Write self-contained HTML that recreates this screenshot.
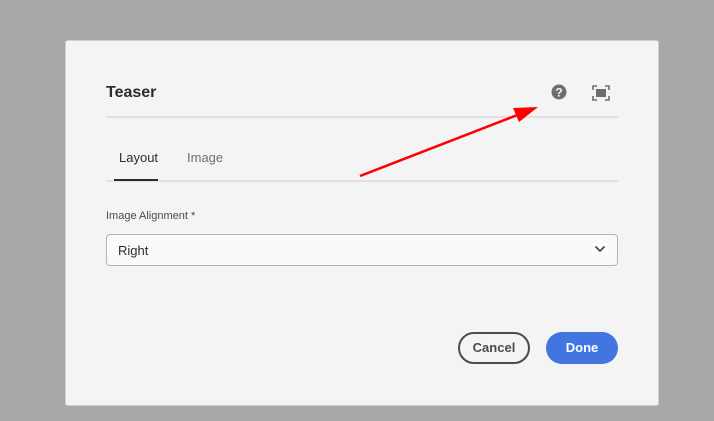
<!DOCTYPE html>
<html><head><meta charset="utf-8"><style>
*{margin:0;padding:0;box-sizing:border-box}
body{width:714px;height:421px;background:#a8a8a8;position:relative;overflow:hidden;font-family:"Liberation Sans",sans-serif}
.dlg{position:absolute;left:65px;top:40px;width:594px;height:366px;background:#f4f4f4;border:1px solid #cfcfcf;border-radius:3px}
.t{position:absolute;font-size:16px;font-weight:bold;color:#2c2c2c;left:106px;top:84px}
.hr{position:absolute;left:106px;width:512px;height:2px;background:#e1e1e1}
.tab{position:absolute;font-size:13px;top:150px}
.sel{position:absolute;left:106px;top:234px;width:512px;height:32px;border:1px solid #b3b3b3;border-radius:4px;background:#fafafa;font-size:13px;color:#2c2c2c;padding:8px 11px}
.btn{position:absolute;top:332px;height:32px;border-radius:16px;font-size:13px;font-weight:bold;text-align:center;line-height:28px}
</style></head><body>
<div class="dlg"></div>
<div class="t">Teaser</div>
<svg style="position:absolute;left:551px;top:84px" width="16" height="16" viewBox="0 0 16 16"><circle cx="8" cy="8" r="7.5" fill="#6e6e6e"/><text x="8" y="12.5" font-size="12" font-weight="bold" fill="#f4f4f4" text-anchor="middle" font-family="Liberation Sans">?</text></svg>
<svg style="position:absolute;left:592px;top:85px" width="18" height="16" viewBox="0 0 18 16"><path d="M1 5V1h4M13 1h4v4M17 11v4h-4M5 15H1v-4" stroke="#6e6e6e" stroke-width="1.6" fill="none"/><rect x="4" y="4" width="10" height="8" fill="#6e6e6e"/></svg>
<div class="hr" style="top:116px"></div>
<div class="tab" style="left:119px;color:#2c2c2c">Layout</div>
<div class="tab" style="left:187px;color:#6e6e6e">Image</div>
<div class="hr" style="top:180px"></div>
<div style="position:absolute;left:114px;top:179px;width:44px;height:2px;background:#2c2c2c"></div>
<div style="position:absolute;left:106px;top:210px;font-size:11px;color:#4b4b4b">Image Alignment *</div>
<div class="sel">Right</div>
<svg style="position:absolute;left:594px;top:245px" width="12" height="8" viewBox="0 0 12 8"><path d="M1.5 1.5L6 6l4.5-4.5" stroke="#4b4b4b" stroke-width="1.8" fill="none"/></svg>
<div class="btn" style="left:458px;width:72px;border:2px solid #4b4b4b;color:#4b4b4b">Cancel</div>
<div class="btn" style="left:546px;width:72px;background:#4375e0;color:#fff;line-height:32px">Done</div>
<svg style="position:absolute;left:0;top:0" width="714" height="421"><line x1="360" y1="176" x2="520" y2="114" stroke="#f00" stroke-width="2.5"/><polygon points="538,107 513,108 519,122" fill="#f00"/></svg>
</body></html>
